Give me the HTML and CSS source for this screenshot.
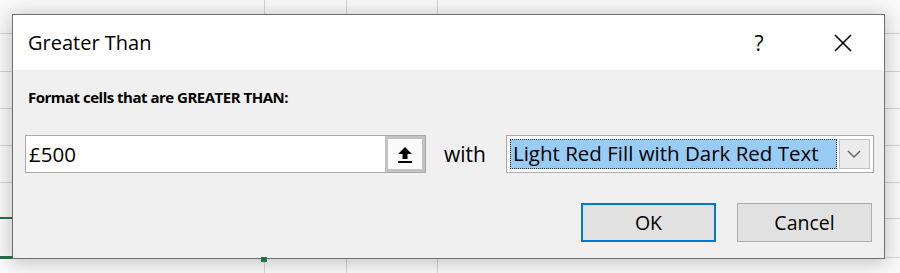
FILE: index.html
```html
<!DOCTYPE html>
<html lang="en">

<head>
    <meta charset="UTF-8">
    <meta name="viewport" content="width=device-width, initial-scale=1.0">
    <title>Greater Than</title>
    <link rel="stylesheet" href="styles.css">
</head>

<body>
    <div class="sheet">
        <div class="dialog">
            <div class="titlebar">
                <span class="title">Greater Than</span>
                <span class="help">?</span>
                <span class="close">
                    <svg width="18" height="18" viewBox="0 0 18 18">
                        <path d="M1 1 L17 17 M17 1 L1 17" stroke="#000" stroke-width="1.6" fill="none" />
                    </svg>
                </span>
            </div>
            <div class="content">
                <div class="prompt">Format cells that are GREATER THAN:</div>
                <div class="row">
                    <div class="ref-input">
                        <span class="value">£500</span>
                        <span class="collapse">
                            <svg width="16" height="17" viewBox="0 0 16 17">
                                <path d="M8 1 L15 8 L10.5 8 L10.5 13 L5.5 13 L5.5 8 L1 8 Z" fill="#000" />
                                <rect x="1" y="15" width="14" height="2" fill="#000" />
                            </svg>
                        </span>
                    </div>
                    <span class="with">with</span>
                    <div class="combo">
                        <span class="combo-value">Light Red Fill with Dark Red Text</span>
                        <span class="combo-btn">
                            <svg width="16" height="10" viewBox="0 0 16 10">
                                <path d="M2 2 L8 8 L14 2" stroke="#606060" stroke-width="1.4" fill="none" />
                            </svg>
                        </span>
                    </div>
                </div>
                <div class="actions">
                    <button class="btn btn-default">OK</button>
                    <button class="btn">Cancel</button>
                </div>
            </div>
        </div>
        <div class="fill-handle"></div>
    </div>
</body>

</html>
```

FILE: styles.css
```css
/* page and worksheet behind the dialog */
body {
    margin: 0;
    padding: 0;
    font-family: "Open Sans", "Noto Sans", sans-serif;
    overflow: hidden;
}

.sheet {
    position: relative;
    width: 900px;
    height: 273px;
    box-sizing: border-box;
    padding: 14px 0 0 12px;
    background-color: #fafafa;
    background-image:
        linear-gradient(#217346, #217346),
        linear-gradient(#217346, #217346),
        linear-gradient(#217346, #217346),
        linear-gradient(#d4d4d4, #d4d4d4),
        linear-gradient(#d4d4d4, #d4d4d4),
        linear-gradient(#d4d4d4, #d4d4d4),
        linear-gradient(#d4d4d4, #d4d4d4),
        linear-gradient(#d4d4d4, #d4d4d4),
        linear-gradient(#d4d4d4, #d4d4d4),
        linear-gradient(#d4d4d4, #d4d4d4),
        linear-gradient(#d4d4d4, #d4d4d4),
        linear-gradient(#d4d4d4, #d4d4d4),
        linear-gradient(#d4d4d4, #d4d4d4);
    background-repeat: no-repeat;
    background-position:
        0 217px,
        0 256px,
        0 256px,
        264px 0,
        346px 0,
        437px 0,
        0 33px,
        0 71px,
        0 108px,
        0 145px,
        0 182px,
        0 218px,
        0 257px;
    background-size:
        12px 2px,
        12px 3px,
        265px 3px,
        1px 100%,
        1px 100%,
        1px 100%,
        100% 1px,
        100% 1px,
        100% 1px,
        100% 1px,
        100% 1px,
        100% 1px,
        100% 1px;
}

.fill-handle {
    position: absolute;
    left: 261px;
    top: 257px;
    width: 6px;
    height: 5px;
    background: #217346;
}

/* dialog */
.dialog {
    width: 873px;
    height: 245px;
    box-sizing: border-box;
    border: 1px solid #6f6f6f;
    background: #f0f0f0;
    box-shadow: 0 2px 18px 2px rgba(0, 0, 0, 0.22);
    display: flex;
    flex-direction: column;
}

.titlebar {
    height: 55px;
    flex-shrink: 0;
    background: #fff;
    display: flex;
    align-items: center;
    padding-left: 15px;
}

.title {
    font-size: 20px;
    color: #000;
}

.help {
    margin-left: auto;
    width: 40px;
    text-align: center;
    font-size: 21px;
    margin-right: 32px;
}

.close {
    width: 64px;
    margin-right: 9px;
    display: flex;
    justify-content: center;
}

.content {
    flex: 1;
    padding: 15px 10px 0 12px;
}

.prompt {
    font-size: 15px;
    font-weight: bold;
    letter-spacing: -0.5px;
    line-height: 24px;
    padding-left: 3px;
}

.row {
    display: flex;
    align-items: center;
    margin-top: 26px;
    height: 38px;
}

.ref-input {
    width: 401px;
    height: 38px;
    box-sizing: border-box;
    border: 1px solid #a9a9a9;
    background: #fff;
    display: flex;
    align-items: center;
}

.value {
    flex: 1;
    padding-left: 3px;
    font-size: 20.5px;
}

.collapse {
    width: 40px;
    height: 36px;
    box-sizing: border-box;
    border: 3px solid #c2c2c2;
    background: #fafafa;
    display: flex;
    align-items: center;
    justify-content: center;
}

.with {
    font-size: 21px;
    margin-left: 18px;
    margin-right: 20px;
}

.combo {
    width: 368px;
    height: 38px;
    box-sizing: border-box;
    border: 1px solid #a9a9a9;
    background: #fff;
    padding: 2px 3px 2px 3px;
    display: flex;
    align-items: center;
    gap: 2px;
}

.combo-value {
    flex: 1;
    height: 30px;
    box-sizing: border-box;
    border: 1px dotted #303030;
    background: #99ccf5;
    padding-left: 2px;
    font-size: 20.5px;
    line-height: 27px;
    white-space: nowrap;
    overflow: hidden;
}

.combo-btn {
    width: 31px;
    height: 30px;
    box-sizing: border-box;
    border: 1px solid #c2c2c2;
    background: #ececec;
    display: flex;
    align-items: center;
    justify-content: center;
}

.actions {
    display: flex;
    justify-content: flex-end;
    gap: 21px;
    margin-top: 30px;
    padding-right: 2px;
}

.btn {
    width: 135px;
    height: 39px;
    box-sizing: border-box;
    border: 1px solid #adadad;
    background: #e1e1e1;
    font-family: "Open Sans", "Noto Sans", sans-serif;
    font-size: 19.5px;
    color: #000;
    padding: 0;
}

.btn-default {
    border: 2px solid #0078d7;
}
```
